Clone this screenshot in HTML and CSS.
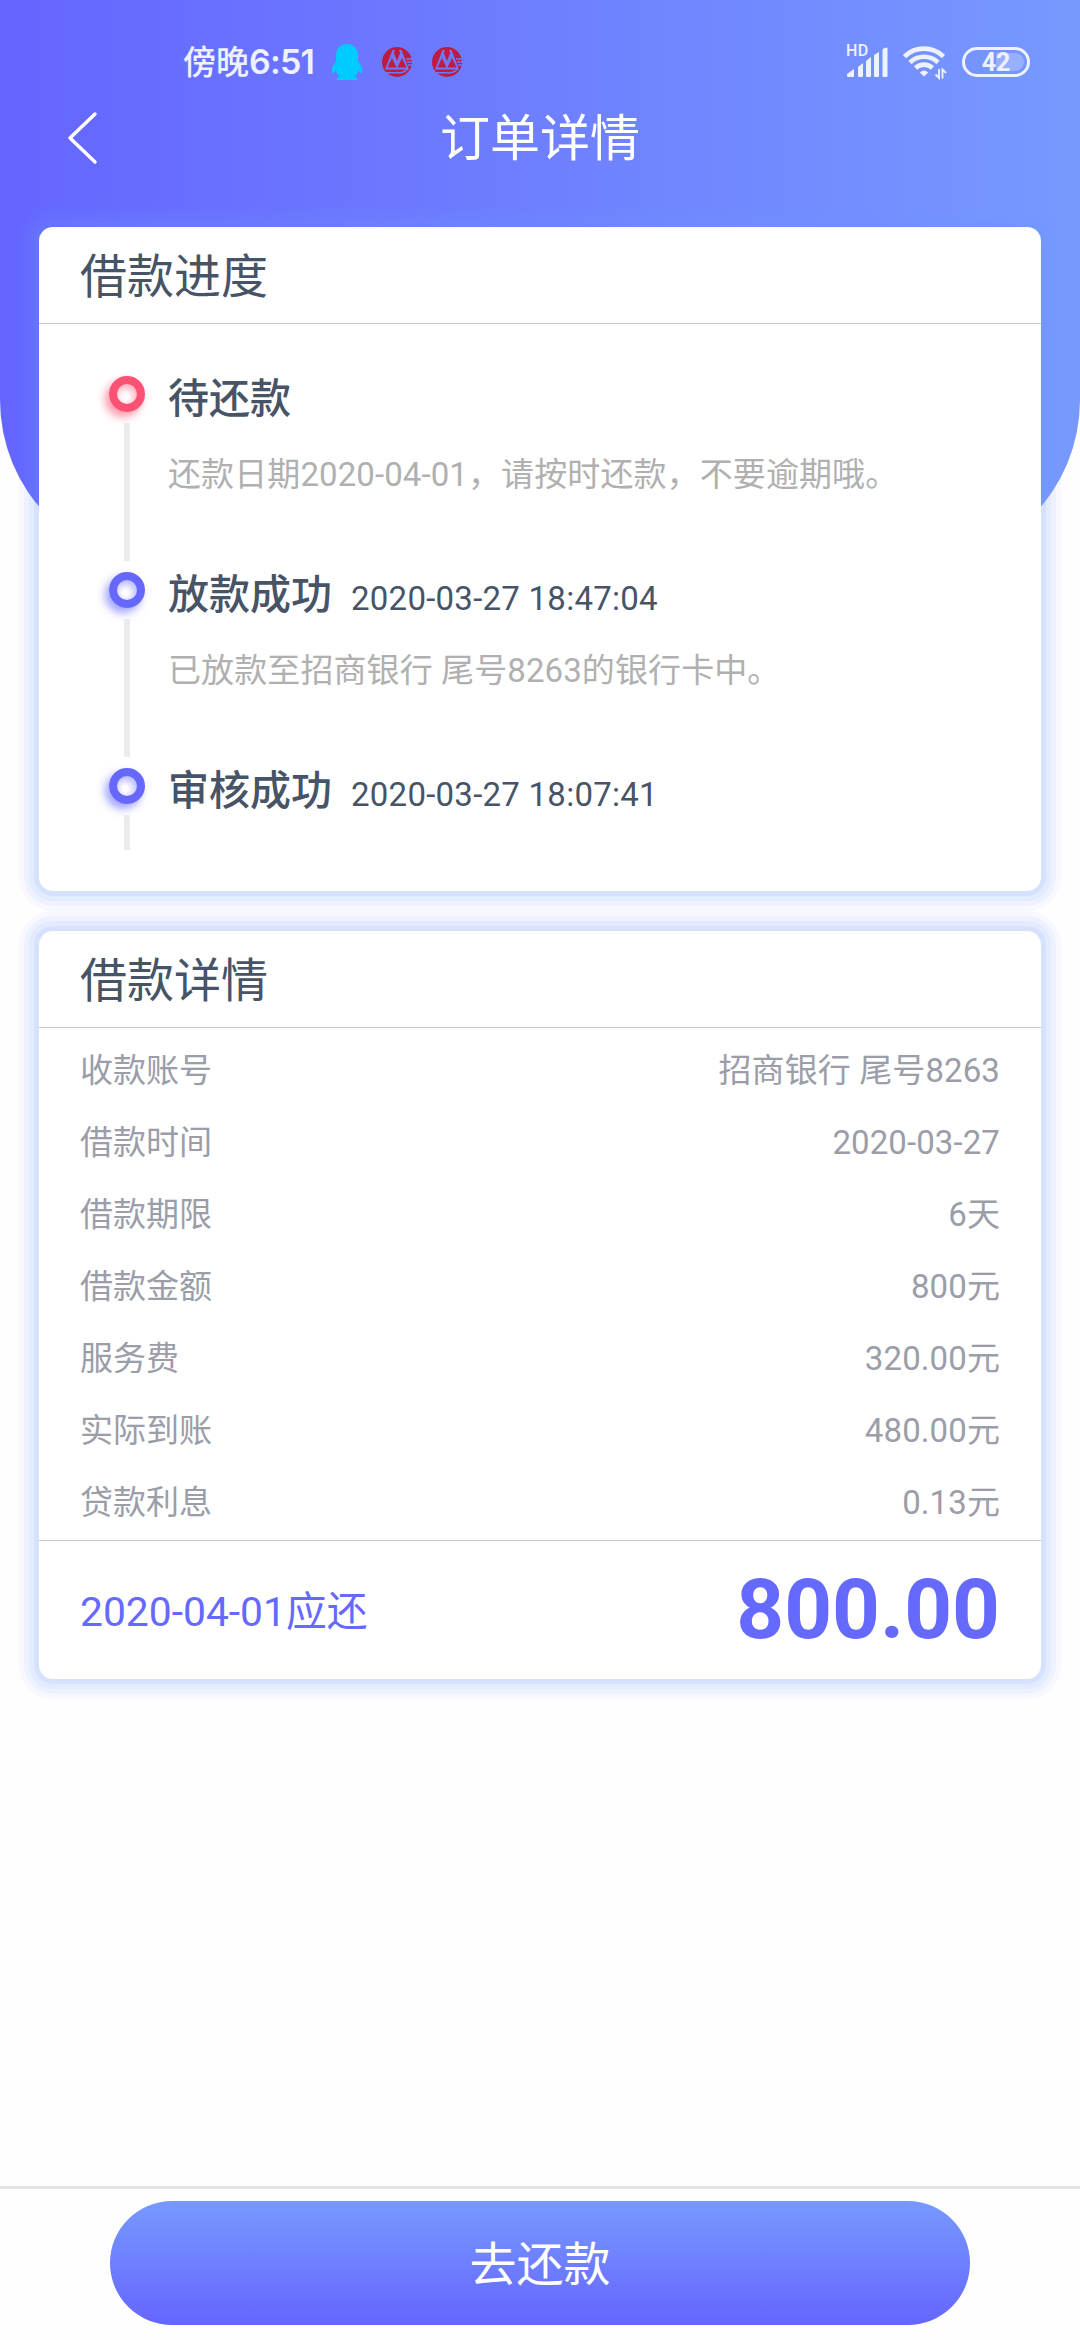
FILE: index.html
```html
<!DOCTYPE html>
<html lang="zh-CN">
<head>
    <meta charset="UTF-8">
    <meta name="viewport" content="width=device-width, initial-scale=1">
    <title>订单详情</title>
    <link rel="stylesheet" href="styles.css">
</head>
<body>
    <div class="header-bg"></div>

    <div class="status-bar">
        <div class="status-left">
            <span class="clock">傍晚<span class="clock-num">6:51</span></span>
            <svg class="qq" width="32" height="38" viewBox="0 0 32 38">
                <path fill="#00cbff" d="M16 1C9 1 5 6 5 13v5C2 22 0 27 1 30c1 1 3-1 4-3 0 3 2 6 4 7-2 0-4 1-3 3h20c1-2-1-3-3-3 2-1 4-4 4-7 1 2 3 4 4 3 1-3-1-8-4-12v-5C27 6 23 1 16 1z"/>
            </svg>
            <svg class="bank" width="30" height="30" viewBox="0 0 30 30">
                <circle cx="15" cy="15" r="15" fill="#bd1c42"/>
                <path fill="#7078f8" d="M3 22.500L10.500 3h2.500l2 6 2-6h2.500L27 22.500z"/>
                <path fill="#bd1c42" d="M5.500 20.500l4.500-9.500 4.500 9.500zM15.500 20.500l4.500-9.500 4.500 9.500zM11.800 6l3.200 8 3.200-8 -1.200-3h-4z"/>
                <path fill="none" stroke="#7078f8" stroke-width="1.500" d="M3 25.800h15q4 0 8-4M24 12h6M25 15h5M26 18h4"/>
            </svg>
            <svg class="bank" width="30" height="30" viewBox="0 0 30 30">
                <circle cx="15" cy="15" r="15" fill="#bd1c42"/>
                <path fill="#7078f8" d="M3 22.500L10.500 3h2.500l2 6 2-6h2.500L27 22.500z"/>
                <path fill="#bd1c42" d="M5.500 20.500l4.500-9.500 4.500 9.500zM15.500 20.500l4.500-9.500 4.500 9.500zM11.800 6l3.200 8 3.200-8 -1.200-3h-4z"/>
                <path fill="none" stroke="#7078f8" stroke-width="1.500" d="M3 25.800h15q4 0 8-4M24 12h6M25 15h5M26 18h4"/>
            </svg>
        </div>
        <div class="status-right">
            <div class="signal">
                <span class="hd">HD</span>
                <svg width="42" height="32" viewBox="0 0 42 32" fill="#eef1ff">
                    <path d="M0 30v-2l7-5v7q0 1-1 1H1q-1 0-1-1zM11 21l5-4v13q0 1-1 1h-3q-1 0-1-1zM19 15l5-4v19q0 1-1 1h-3q-1 0-1-1zM27 9l5-3v24q0 1-1 1h-3q-1 0-1-1zM35.500 4q0-1 1-1.500l3-1q1 0 1 1V30q0 1-1 1h-3q-1 0-1-1z"/>
                </svg>
            </div>
            <svg class="wifi" width="44" height="36" viewBox="0 0 44 36">
                <g fill="none" stroke="#eef1ff" stroke-width="4.600">
                    <path d="M1.500 12.500a28 28 0 0 1 39 0"/>
                    <path d="M7 18.500a20 20 0 0 1 28 0"/>
                    <path d="M12.500 24a12.500 12.500 0 0 1 17 0"/>
                </g>
                <path fill="#eef1ff" d="M21 32.500l-4.200-4q4.200-4 8.400 0z"/>
                <path fill="none" stroke="#eef1ff" stroke-width="1.900" d="M36 25v9l-3.500-3.500M39.500 34.500v-9l3.500 3.500"/>
            </svg>
            <div class="battery"><span>42</span></div>
        </div>
    </div>

    <header class="navbar">
        <svg class="back" width="34" height="54" viewBox="0 0 34 54">
            <path d="M29 3L4 27l25 24" fill="none" stroke="#fff" stroke-width="3.500" stroke-linecap="round" stroke-linejoin="round"/>
        </svg>
        <h1>订单详情</h1>
    </header>

    <main class="content">
        <section class="card progress">
            <h2>借款进度</h2>
            <ul class="timeline">
                <li class="step current">
                    <div class="rail"><i class="dot"></i><i class="line"></i></div>
                    <div class="info">
                        <p class="step-title">待还款</p>
                        <p class="desc">还款日期2020-04-01，请按时还款，不要逾期哦。</p>
                    </div>
                </li>
                <li class="step">
                    <div class="rail"><i class="dot"></i><i class="line"></i></div>
                    <div class="info">
                        <p class="step-title">放款成功<span class="time">2020-03-27 18:47:04</span></p>
                        <p class="desc">已放款至招商银行 尾号8263的银行卡中。</p>
                    </div>
                </li>
                <li class="step last">
                    <div class="rail"><i class="dot"></i><i class="line"></i></div>
                    <div class="info">
                        <p class="step-title">审核成功<span class="time">2020-03-27 18:07:41</span></p>
                    </div>
                </li>
            </ul>
        </section>

        <section class="card detail">
            <h2>借款详情</h2>
            <dl class="rows">
                <div><dt>收款账号</dt><dd>招商银行 尾号8263</dd></div>
                <div><dt>借款时间</dt><dd>2020-03-27</dd></div>
                <div><dt>借款期限</dt><dd>6天</dd></div>
                <div><dt>借款金额</dt><dd>800元</dd></div>
                <div><dt>服务费</dt><dd>320.00元</dd></div>
                <div><dt>实际到账</dt><dd>480.00元</dd></div>
                <div><dt>贷款利息</dt><dd>0.13元</dd></div>
            </dl>
            <div class="total">
                <span class="total-label">2020-04-01应还</span>
                <span class="amount">800.00</span>
            </div>
        </section>
    </main>

    <footer class="bottom-bar">
        <button class="repay">去还款</button>
    </footer>
</body>
</html>
```

FILE: styles.css
```css
* {
    box-sizing: border-box;
    margin: 0;
    padding: 0;
}
body {
    display: flex;
    flex-direction: column;
    height: 2340px;
    position: relative;
    overflow: hidden;
    background-color: #fefefe;
    font-family: Roboto, "Noto Sans CJK SC", sans-serif;
    color: #475467;
}
h1, h2 {
    font-weight: normal;
}
ul {
    list-style: none;
}

/* blue backdrop behind the first card */
.header-bg {
    position: absolute;
    top: 0;
    left: 0;
    z-index: -1;
    width: 100%;
    height: 565px;
    border-radius: 0 0 165px 165px;
    background: linear-gradient(90deg, #6565ff, #7799ff);
}

/* status bar */
.status-bar {
    display: flex;
    justify-content: space-between;
    height: 90px;
    padding: 34px 50px 0 183px;
    color: #eef1ff;
}
.status-left, .status-right {
    display: flex;
    align-items: center;
    height: 56px;
}
.clock {
    width: 148px;
    padding-top: 1px;
    font-size: 33px;
    font-weight: 500;
    line-height: 56px;
    white-space: nowrap;
}
.clock-num {
    font-family: Inter, sans-serif;
    font-size: 34px;
    font-weight: 600;
    letter-spacing: -0.8px;
}
.qq {
    margin-right: 19px;
}
.bank {
    margin-right: 20px;
}
.signal {
    position: relative;
    height: 32px;
    margin-right: 14px;
}
.hd {
    position: absolute;
    top: -3px;
    left: -1px;
    font-size: 16px;
    font-weight: 500;
    line-height: 16px;
    letter-spacing: 0.5px;
}
.wifi {
    margin-right: 15px;
}
.battery {
    width: 68px;
    height: 30px;
    border: 3px solid #eef1ff;
    border-radius: 15px;
    padding: 3px;
    font-size: 25px;
    font-weight: bold;
    line-height: 19px;
    text-align: center;
}
.battery span {
    display: block;
    height: 18px;
    border-radius: 9px;
    background: linear-gradient(90deg, transparent 50%, rgba(255, 255, 255, 0.25) 50%);
}

/* title bar */
.navbar {
    display: flex;
    align-items: center;
    height: 96px;
    padding: 0 66px;
}
.navbar h1 {
    flex: 1;
    margin-right: 34px;
    padding-top: 2px;
    font-size: 50px;
    line-height: 96px;
    text-align: center;
    color: #fff;
}

.content {
    flex: 1;
    padding: 41px 39px 0;
}
.card {
    background-color: #fff;
    border-radius: 14px;
    box-shadow:
        0 0 0 5px rgba(112, 150, 255, 0.11),
        0 0 0 10px rgba(112, 150, 255, 0.08),
        0 0 0 15px rgba(112, 150, 255, 0.07),
        0 0 0 20px rgba(112, 150, 255, 0.05);
}
.card h2 {
    height: 97px;
    padding-left: 41px;
    border-bottom: 1px solid #c8cacd;
    font-size: 47px;
    line-height: 99px;
}

/* loan progress */
.progress {
    height: 664px;
    margin-bottom: 40px;
}
.timeline {
    padding: 52px 0 0 70px;
}
.step {
    display: flex;
    height: 196px;
}
.rail {
    display: flex;
    flex-direction: column;
    align-items: center;
    width: 36px;
    margin-right: 23px;
}
.dot {
    width: 36px;
    height: 36px;
    border: 8px solid #6668fb;
    border-radius: 50%;
    background: radial-gradient(circle at 42% 64%, #fff 15%, #b4b5fd 80%);
    box-shadow: -4px 5px 8px rgba(102, 104, 251, 0.6);
}
.current .dot {
    border-color: #fb5274;
    background: radial-gradient(circle at 42% 64%, #fff 15%, #fda9ba 80%);
    box-shadow: -4px 5px 8px rgba(251, 82, 116, 0.6);
}
.line {
    width: 6px;
    height: 138px;
    margin-top: 11px;
    background-color: #e9ebed;
}
.last .line {
    height: 35px;
}
.step-title {
    display: flex;
    height: 60px;
    margin-top: -7px;
    font-size: 41px;
    font-weight: 500;
    line-height: 60px;
}
.time {
    margin-left: 19px;
    padding-top: 4px;
    font-size: 33px;
    font-weight: normal;
    letter-spacing: 0.25px;
}
.desc {
    margin-top: 19px;
    font-size: 33px;
    line-height: 54px;
    letter-spacing: 0.1px;
    color: #b0b0b0;
}

/* loan detail */
.detail {
    height: 748px;
}
.rows {
    height: 513px;
    padding: 7px 41px 0;
    border-bottom: 1px solid #c8cacd;
    font-size: 33px;
    color: #9b9da8;
}
.rows div {
    display: flex;
    justify-content: space-between;
    height: 72px;
    line-height: 72px;
}
.rows dd {
    letter-spacing: 0.1px;
}
.total {
    display: flex;
    align-items: center;
    justify-content: space-between;
    height: 136px;
    padding: 0 41px;
    color: #6669fe;
}
.total-label {
    padding-bottom: 2px;
    font-size: 40.8px;
}
.amount {
    font-size: 83.5px;
    font-weight: bold;
}

/* bottom action */
.bottom-bar {
    height: 154px;
    padding-top: 12px;
    border-top: 3px solid #e3e3e3;
    text-align: center;
}
.repay {
    width: 860px;
    height: 124px;
    padding-bottom: 5px;
    border: none;
    border-radius: 62px;
    background: linear-gradient(#7799ff, #6565ff);
    font-family: inherit;
    font-size: 47px;
    color: #fff;
}
```
